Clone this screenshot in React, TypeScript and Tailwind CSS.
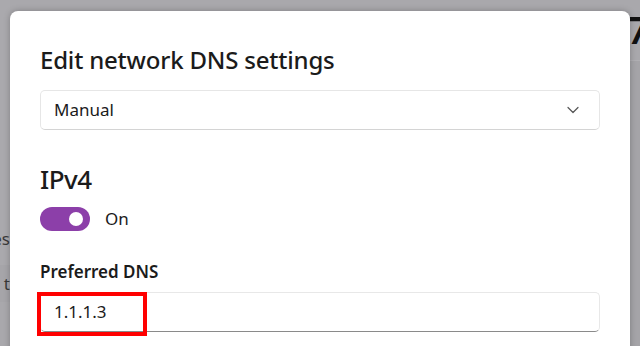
import React from "react";

export default function App() {
  return (
    <div
      className="relative w-[640px] h-[346px] overflow-hidden bg-[#a9a8ac] text-[#1b1b1b]"
      style={{ fontFamily: '"Noto Sans", "Open Sans", sans-serif' }}
    >
      {/* background page peeking out */}
      <div className="flex h-full justify-between">
        <div className="w-[10px] flex flex-col overflow-hidden">
          <div className="h-[265px] bg-[#aaa9ad] flex flex-col justify-end">
            <div className="flex justify-end pb-[16px] text-[17px] leading-[20px] text-[#3a3a3a] whitespace-nowrap">
              es
            </div>
          </div>
          <div className="h-[37px] bg-[#a6a5a9] flex items-center justify-end text-[17px] leading-[20px] text-[#3a3a3a] whitespace-nowrap">
            t
          </div>
          <div className="flex-1 bg-[#a9a8ac]" />
        </div>
        <div className="w-[10px] flex flex-col overflow-hidden">
          <div className="h-[60px] pt-[8px] ml-[-3px] text-[38px] leading-[42px] font-semibold text-[#111111] whitespace-nowrap">
            7
          </div>
          <div className="flex-1 bg-[#a5a4a8] border-t border-[#b0afb3]" />
        </div>
      </div>

      {/* dialog */}
      <div className="absolute left-[10px] right-[10px] top-[11px] bottom-[-20px] rounded-t-[8px] bg-white shadow-[0_0_6px_rgba(0,0,0,0.25)] px-[30px] pt-[33px]">
        <h1 className="text-[24px] leading-[32px] font-medium tracking-[-0.2px]">
          Edit network DNS settings
        </h1>
        <div className="mt-[14px] h-[40px] rounded-[5px] border border-[#e6e6e6] border-b-[#d4d4d4] flex items-center justify-between pl-[13px] pr-[20px]">
          <span className="text-[17px] leading-[24px]">Manual</span>
          <svg width="12" height="8" viewBox="0 0 12 8" fill="none">
            <path d="M1 1.5 L6 6.5 L11 1.5" stroke="#555" strokeWidth="1.2" strokeLinecap="round" strokeLinejoin="round" />
          </svg>
        </div>

        <h2 className="mt-[33px] text-[26px] leading-[32px] font-medium tracking-[-0.5px]">IPv4</h2>

        <div className="mt-[12px] flex items-center gap-[15px]">
          <div className="w-[50px] h-[24px] rounded-full bg-[#8c3fa9] flex items-center justify-end pr-[7px]">
            <div className="w-[14px] h-[14px] rounded-full bg-white" />
          </div>
          <span className="text-[17px] leading-[24px]">On</span>
        </div>

        <div className="mt-[29px] text-[17px] leading-[24px] font-semibold">Preferred DNS</div>

        <div className="relative mt-[8px] h-[40px] rounded-[5px] border border-[#e8e8e8] border-b-[#8a8a8a] flex items-center pl-[13px]">
          <span className="text-[17px] leading-[24px]">1.1.1.3</span>
          <div className="absolute left-[-4px] top-[-1px] w-[110px] h-[44px] border-[4px] border-[#ff0000]" />
        </div>
      </div>
    </div>
  );
}
